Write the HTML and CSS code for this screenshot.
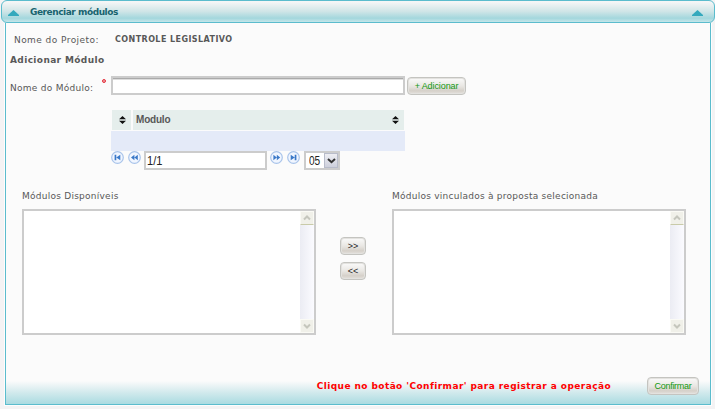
FILE: index.html
```html
<!DOCTYPE html>
<html lang="pt-BR">
<head>
<meta charset="utf-8">
<title>Gerenciar módulos</title>
<link rel="stylesheet" href="styles.css">
</head>
<body>
<header class="titlebar">
  <svg class="tri" width="11" height="6" viewBox="0 0 11 6"><path d="M5.5 0 11 5v1H0V5z"/></svg>
  <h1><span class="t-title">Gerenciar módulos</span></h1>
  <svg class="tri" width="11" height="6" viewBox="0 0 11 6"><path d="M5.5 0 11 5v1H0V5z"/></svg>
</header>
<main class="panel">
  <div class="project"><span class="label t-proj">Nome do Projeto:</span><b class="t-name">CONTROLE LEGISLATIVO</b></div>
  <h2><span class="t-sub">Adicionar Módulo</span></h2>
  <div class="add-row">
    <span class="label t-mod">Nome do Módulo:</span><span class="req"></span>
    <input class="field name" type="text">
    <button class="btn add"><span class="t-add">+ Adicionar</span></button>
  </div>
  <section class="grid">
    <div class="grid-head">
      <div class="th first"><svg width="7" height="8" viewBox="0 0 7 8"><path d="M3.5 0 7 3.3H0zM0 4.7h7L3.5 8z"/></svg></div>
      <div class="th"><span class="t-col">Modulo</span><svg width="7" height="8" viewBox="0 0 7 8"><path d="M3.5 0 7 3.3H0zM0 4.7h7L3.5 8z"/></svg></div>
    </div>
    <div class="grid-row"></div>
    <div class="pager">
      <svg class="nav" viewBox="0 0 13 13"><circle cx="6.5" cy="6.5" r="5.8"/><path d="M3.6 3.8h1.7v5.4H3.6zM9.3 3.8v5.4L5.3 6.5z"/></svg>
      <svg class="nav second" viewBox="0 0 13 13"><circle cx="6.5" cy="6.5" r="5.8"/><path d="M6.4 3.8v5.4L3 6.5zM9.8 3.8v5.4L6.4 6.5z"/></svg>
      <div class="field page"><span class="t-page">1/1</span></div>
      <svg class="nav" viewBox="0 0 13 13"><circle cx="6.5" cy="6.5" r="5.8"/><path d="M3.4 3.8v5.4l3.4-2.7zM6.8 3.8v5.4l3.4-2.7z"/></svg>
      <svg class="nav second" viewBox="0 0 13 13"><circle cx="6.5" cy="6.5" r="5.8"/><path d="M3.7 3.8v5.4l4-2.7zM7.7 3.8h1.7v5.4H7.7z"/></svg>
      <div class="field select"><span class="t-size">05</span><span class="drop"><svg width="9" height="6" viewBox="0 0 9 6"><path d="m1 1 3.5 3.2L8 1"/></svg></span></div>
    </div>
  </section>
  <section class="transfer">
    <div class="col">
      <div class="caption"><span class="t-disp">Módulos Disponíveis</span></div>
      <div class="list"><div class="scroll">
        <span class="arrow up"><svg width="8" height="6" viewBox="0 0 8 6"><path d="m1 4.5 3-3 3 3"/></svg></span>
        <span class="arrow"><svg width="8" height="6" viewBox="0 0 8 6"><path d="m1 1.5 3 3 3-3"/></svg></span>
      </div></div>
    </div>
    <div class="moves">
      <button class="btn move">&gt;&gt;</button>
      <button class="btn move">&lt;&lt;</button>
    </div>
    <div class="col">
      <div class="caption"><span class="t-vinc">Módulos vinculados à proposta selecionada</span></div>
      <div class="list"><div class="scroll">
        <span class="arrow up"><svg width="8" height="6" viewBox="0 0 8 6"><path d="m1 4.5 3-3 3 3"/></svg></span>
        <span class="arrow"><svg width="8" height="6" viewBox="0 0 8 6"><path d="m1 1.5 3 3 3-3"/></svg></span>
      </div></div>
    </div>
  </section>
  <footer class="actions">
    <b class="t-note">Clique no botão 'Confirmar' para registrar a operação</b>
    <button class="btn confirm"><span class="t-conf">Confirmar</span></button>
  </footer>
</main>
</body>
</html>
```
FILE: styles.css
```css
* { box-sizing: border-box; }
body { margin: 0; height: 409px; overflow: hidden; background: #f4f3f4; color: #585858; font: 9px/14px "DejaVu Sans", sans-serif; white-space: nowrap; }
h1, h2 { margin: 0; font-size: 9px; line-height: 14px; }
svg { display: block; flex: none; }
button, input { font: inherit; margin: 0; outline: 0; }

.titlebar { display: flex; align-items: center; height: 23px; margin-left: 1px; padding: 0 11px 0 6px; border: 1px solid #5bbccd; border-radius: 6px; background: linear-gradient(#f5f6f6 5%, #cfe5e7 50%, #a3d7dd 82%, #c5e6ea); }
.titlebar h1 { flex: 1; padding-left: 11px; color: #17636f; letter-spacing: -.45px; }
.tri { fill: #34a9bd; margin-top: 2px; }

.panel { width: 706px; height: 382px; margin-left: 5px; border: 1px solid #5bbccd; border-top: 0; box-shadow: 0 0 0 1px #fdfdfd; background: linear-gradient(#fbfbfb 358px, #d0e9ec 370px, #aadbe1 381px); clip-path: inset(0 -1px -1px -1px); }
.project { display: flex; padding: 10px 0 0 8px; }
.t-proj { width: 101px; letter-spacing: .44px; }
.t-name { font-size: 8px; letter-spacing: .43px; }
h2 { padding: 6px 0 0 4px; letter-spacing: .38px; }
.add-row { display: flex; align-items: flex-start; height: 25px; margin-top: 9px; padding-left: 4px; }
.add-row .label { width: 92px; padding-top: 5px; letter-spacing: .28px; }
.req { width: 4px; height: 4px; margin: 3px 5px 0 0; border: 1.5px solid #e5333f; border-radius: 50%; background: #f0a0a5; }
.field { background: #fff; border: 2px solid #ccc; color: #222; font: 12px/15px "Liberation Sans", Arial, sans-serif; }
.name { width: 294px; height: 19px; border-radius: 0; box-shadow: inset 0 1px #aaa, inset 0 2px #ddd; }

.btn { display: flex; align-items: center; justify-content: center; padding: 0; height: 18px; border: 1px solid #c4c4c0; border-radius: 4px; box-shadow: inset 0 0 0 1px #e3e2df; background: linear-gradient(#fafafa, #e9e7e3 50%, #d5d0c9 80%, #e5e2de); color: #109810; font: 9px/14px "Liberation Sans", Arial, sans-serif; }
.add { width: 59px; margin: 1px 0 0 2px; }
.t-add { letter-spacing: -.1px; }
.t-conf { letter-spacing: -.3px; }

.grid { width: 294px; margin: 9px 0 0 105px; }
.grid-head { display: flex; gap: 2px; padding: 0 1px; }
.th { display: flex; align-items: center; height: 20px; flex: 1; padding: 0 5px 0 3px; justify-content: space-between; background: #e5eeec; font: bold 10px/14px "Liberation Sans", Arial, sans-serif; letter-spacing: -.2px; fill: #111; }
.th.first { flex: 0 0 19px; padding: 0 0 0 1px; justify-content: center; }
.grid-row { height: 20px; margin-top: 1px; background: #e4eaf8; }
.pager { display: flex; align-items: flex-start; }
.nav { width: 13px; height: 13px; fill: #3b79c8; }
.nav.second { margin-left: 4px; }
.nav circle { fill: #f1f6ff; stroke: #a9c4ea; stroke-width: 1.2; }
.page { width: 123px; height: 19px; margin: 0 3px; padding-left: 1px; }
.page span, .select span { display: block; transform-origin: 0 50%; }
.page { line-height: 17px; }
.t-page { transform: scaleX(.92); }
.select { display: flex; width: 36px; height: 19px; margin-left: 4px; padding-left: 3px; line-height: 17px; justify-content: space-between; }
.t-size { transform: scaleX(.84); }
.select .drop { display: flex; align-items: center; justify-content: center; width: 14px; height: 15px; border: 1px solid #b8bcca; background: linear-gradient(#eeeef3, #cdd0dc); }
.drop path { fill: none; stroke: #333; stroke-width: 2; }

.transfer { display: flex; padding-left: 16px; margin-top: 19px; }
.col { width: 294px; }
.caption { height: 20px; letter-spacing: .25px; }
.list { height: 126px; border: 2px solid #ccc; background: #fff; display: flex; justify-content: flex-end; }
.scroll { display: flex; flex-direction: column; justify-content: space-between; width: 14px; background: linear-gradient(90deg, #ebecf3, #fbfbff); }
.arrow { display: flex; align-items: center; justify-content: center; height: 14px; background: #f0f0e9; border: 1px solid #fafaf5; }
.arrow.up { border-bottom-color: #c9cba9; }
.arrow path { fill: none; stroke: #c5c6bd; stroke-width: 2; }
.moves { width: 76px; padding: 48px 0 0 24px; }
.move { width: 26px; color: #222; margin-bottom: 7px; }

.actions { display: flex; align-items: center; justify-content: flex-end; height: 18px; margin-top: 42px; padding-right: 11px; }
.actions b { color: #f00; margin-right: 36px; letter-spacing: .42px; }
.confirm { width: 52px; }
```
